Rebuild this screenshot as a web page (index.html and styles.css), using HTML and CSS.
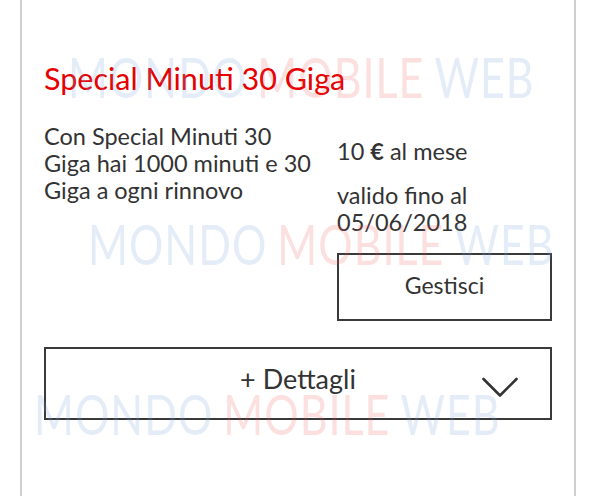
FILE: index.html
```html
<!DOCTYPE html>
<html lang="it">
<head>
<meta charset="utf-8">
<title>Special Minuti 30 Giga</title>
<link rel="stylesheet" href="styles.css">
</head>
<body>
<div class="card">
  <h1 class="title">Special Minuti 30 Giga</h1>
  <div class="info">
    <p class="desc">Con Special Minuti 30<br>Giga hai 1000 minuti e 30<br>Giga a ogni rinnovo</p>
    <div class="side">
      <p class="price">10 <b>€</b> al mese</p>
      <p class="valid">valido fino al<br>05/06/2018</p>
      <button class="btn manage" type="button">Gestisci</button>
    </div>
  </div>
  <button class="btn details" type="button">
    <span class="details-label">+ Dettagli</span>
    <svg class="chevron" width="36" height="21" viewBox="0 0 36 21" aria-hidden="true"><path d="M1.5 2 L18 18.5 L34.5 2" fill="none" stroke="#333" stroke-width="2.6" stroke-linecap="round" stroke-linejoin="round"/></svg>
  </button>
  <div class="wm wm1"><span class="b">MONDO</span><span class="r">MOBILE</span><span class="b">WEB</span></div>
  <div class="wm wm2"><span class="b">MONDO</span><span class="r">MOBILE</span><span class="b">WEB</span></div>
  <div class="wm wm3"><span class="b">MONDO</span><span class="r">MOBILE</span><span class="b">WEB</span></div>
</div>
</body>
</html>
```
FILE: styles.css
```css
html, body {
  margin: 0;
  padding: 0;
  background: #ffffff;
  overflow: hidden;
}
body {
  font-family: Lato, "Open Sans", sans-serif;
  color: #333333;
}
.card {
  position: relative;
  box-sizing: border-box;
  margin-left: 20px;
  width: 556px;
  min-height: 520px;
  border-left: 2px solid #cfcfcf;
  border-right: 2px solid #cfcfcf;
  padding: 60px 22px 0 22px;
}
.title {
  margin: 0;
  font-weight: 400;
  font-size: 30.5px;
  line-height: 36px;
  color: #e60000;
}
.info {
  display: grid;
  grid-template-columns: 293px 1fr;
  margin-top: 27px;
}
.desc {
  margin: 0;
  font-size: 23.5px;
  line-height: 27px;
}
.side {
  display: flex;
  flex-direction: column;
  padding-top: 15px;
}
.price, .valid {
  margin: 0;
  font-size: 23.5px;
  line-height: 27px;
}
.price b { font-weight: 700; }
.valid { margin-top: 17px; }
.btn {
  box-sizing: border-box;
  background: transparent;
  border: 2px solid #3a3a3a;
  font-family: inherit;
  color: #333333;
  padding: 0;
  cursor: pointer;
}
.manage {
  margin-top: 17px;
  height: 68px;
  font-size: 23px;
  padding-bottom: 4px;
}
.details {
  display: grid;
  grid-template-columns: 1fr auto 1fr;
  align-items: center;
  width: 100%;
  height: 73px;
  margin-top: 26px;
  font-size: 27px;
}
.details-label {
  grid-column: 2;
  margin-bottom: 10px;
}
.chevron {
  grid-column: 3;
  justify-self: end;
  margin-right: 32px;
  margin-top: 8px;
}
.wm {
  position: absolute;
  pointer-events: none;
  font-family: Lato, sans-serif;
  font-size: 43px;
  line-height: 1;
  letter-spacing: 1px;
  white-space: nowrap;
  display: flex;
  gap: 10px;
  transform: scaleY(1.3);
  transform-origin: top left;
}
.wm .b { color: rgba(120, 165, 215, 0.2); }
.wm .r { color: rgba(240, 80, 80, 0.18); }
.wm1 { left: 46px; top: 49px; }
.wm2 { left: 66px; top: 216px; }
.wm3 { left: 12px; top: 386px; }
```
